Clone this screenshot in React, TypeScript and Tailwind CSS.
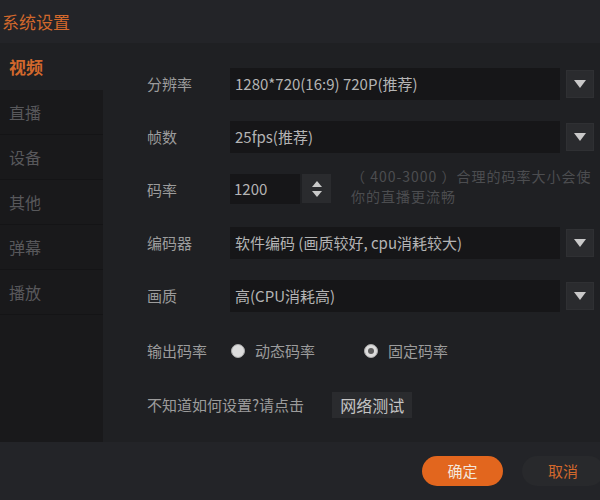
import React from "react";

const font = { fontFamily: '"Noto Sans CJK SC", "Noto Sans", sans-serif' };

const navItems = ["直播", "设备", "其他", "弹幕", "播放"];

const Arrow = () => (
	<div className="w-[28px] h-[28px] ml-[6px] bg-[#2a2b2e] border border-[#2f3033] flex items-center justify-center">
		<svg width="12" height="8" viewBox="0 0 12 8">
			<path d="M0 0 L12 0 L6 8 Z" fill="#c9c9c9" />
		</svg>
	</div>
);

const Select = ({ value }: { value: string }) => (
	<div className="flex items-center">
		<div className="w-[330px] h-[32px] bg-[#161618] flex items-center px-[5px] text-[15px] text-[#b4b4b4]">
			{value}
		</div>
		<Arrow />
	</div>
);

const Row = ({ label, children }: { label: string; children: React.ReactNode }) => (
	<div className="flex items-center h-[32px]">
		<div className="w-[83px] shrink-0 text-[15px] text-[#9c9c9c]">{label}</div>
		{children}
	</div>
);

const Radio = ({ checked, label }: { checked?: boolean; label: string }) => (
	<div className="flex items-center gap-[10px]">
		<div className="w-[14px] h-[14px] rounded-full bg-[#dcdcdc] border border-[#a9a9a9] flex items-center justify-center">
			{checked && <div className="w-[6px] h-[6px] rounded-full bg-[#5c5c5c]" />}
		</div>
		<span className="text-[15px] text-[#9c9c9c]">{label}</span>
	</div>
);

export default function App() {
	return (
		<div className="w-[600px] h-[500px] flex flex-col bg-[#1f2023] overflow-hidden" style={font}>
			{/* Title bar */}
			<div className="h-[43px] bg-[#232428] flex items-center px-[2px] shrink-0">
				<span className="text-[17px] text-[#d2682c]">系统设置</span>
			</div>

			{/* Body */}
			<div className="flex flex-1 min-w-0">
				{/* Sidebar */}
				<div className="w-[103px] shrink-0 bg-[#19191b] flex flex-col">
					<div className="h-[47px] bg-[#1f2023] flex items-center pl-[9px] text-[17px] text-[#d2682c] font-bold">
						视频
					</div>
					{navItems.map((n) => (
						<div
							key={n}
							className="h-[45px] flex items-center pl-[9px] text-[16px] text-[#58585b] border-b border-[#141416]"
						>
							{n}
						</div>
					))}
				</div>

				{/* Content */}
				<div className="flex-1 min-w-0 pl-[44px] pt-[25px] flex flex-col">
					<div className="flex flex-col gap-[21px]">
						<Row label="分辨率">
							<Select value="1280*720(16:9) 720P(推荐)" />
						</Row>
						<Row label="帧数">
							<Select value="25fps(推荐)" />
						</Row>
						<Row label="码率">
							<div className="flex items-start">
								<div className="w-[70px] h-[30px] bg-[#161618] flex items-center px-[4px] text-[15px] text-[#b4b4b4]">
									1200
								</div>
								<div className="w-[29px] h-[29px] ml-[2px] bg-[#2a2b2e] flex flex-col items-center justify-center gap-[4px]">
									<svg width="10" height="6" viewBox="0 0 10 6">
										<path d="M0 6 L10 6 L5 0 Z" fill="#c9c9c9" />
									</svg>
									<svg width="10" height="6" viewBox="0 0 10 6">
										<path d="M0 0 L10 0 L5 6 Z" fill="#c9c9c9" />
									</svg>
								</div>
								<div className="ml-[20px] -mt-[8px] whitespace-nowrap text-[14px] leading-[20px] text-[#4c4d50] tracking-[1px]">
									（ 400-3000 ）合理的码率大小会使
									<br />
									你的直播更流畅
								</div>
							</div>
						</Row>
						<Row label="编码器">
							<Select value="软件编码 (画质较好, cpu消耗较大)" />
						</Row>
						<Row label="画质">
							<Select value="高(CPU消耗高)" />
						</Row>
					</div>

					<div className="flex items-center h-[24px] mt-[27px]">
						<div className="w-[84px] text-[15px] text-[#9c9c9c]">输出码率</div>
						<div className="w-[133px]">
							<Radio label="动态码率" />
						</div>
						<Radio checked label="固定码率" />
					</div>

					<div className="flex items-center mt-[29px]">
						<span className="text-[15px] text-[#9c9c9c]">不知道如何设置?请点击</span>
						<div className="ml-[28px] h-[26px] px-[8px] bg-[#2a2b2e] flex items-center text-[16px] text-[#c4c4c4]">
							网络测试
						</div>
					</div>
				</div>
			</div>

			{/* Footer */}
			<div className="h-[58px] bg-[#232428] flex items-center justify-end gap-[19px] shrink-0 -mr-[4px]">
				<div className="w-[81px] h-[30px] rounded-full bg-[#e2661e] flex items-center justify-center text-[15px] text-[#f3e6dc]">
					确定
				</div>
				<div className="w-[82px] h-[30px] rounded-full bg-[#28292c] flex items-center justify-center text-[15px] text-[#d2682c]">
					取消
				</div>
			</div>
		</div>
	);
}
